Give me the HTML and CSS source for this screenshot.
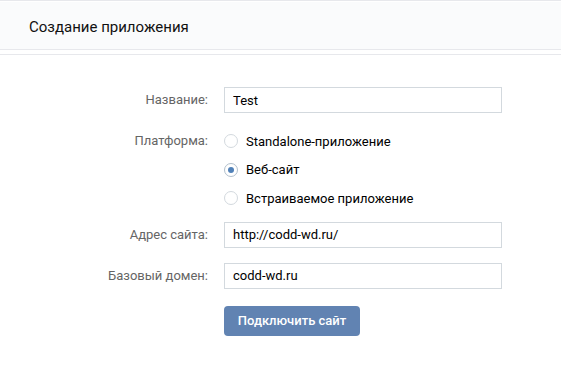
FILE: index.html
```html
<!DOCTYPE html>
<html lang="ru">
<head>
    <meta charset="UTF-8">
    <meta name="viewport" content="width=device-width, initial-scale=1.0">
    <title>Создание приложения</title>
    <link rel="stylesheet" href="styles.css">
</head>
<body>
    <div class="page">
        <div class="page-head">
            <div class="page-header">
                <h1 class="page-title">Создание приложения</h1>
            </div>
        </div>

        <form class="app-form">
            <div class="form-row">
                <label class="form-label" for="appName">Название:</label>
                <input class="form-input" id="appName" type="text" value="Test">
            </div>

            <div class="form-row form-row-top">
                <div class="form-label">Платформа:</div>
                <div class="radio-list">
                    <label class="radio">
                        <input type="radio" name="platform">
                        <span class="radio-mark"></span>
                        Standalone-приложение
                    </label>
                    <label class="radio">
                        <input type="radio" name="platform" checked>
                        <span class="radio-mark"></span>
                        Веб-сайт
                    </label>
                    <label class="radio">
                        <input type="radio" name="platform">
                        <span class="radio-mark"></span>
                        Встраиваемое приложение
                    </label>
                </div>
            </div>

            <div class="form-row">
                <label class="form-label" for="siteAddress">Адрес сайта:</label>
                <input class="form-input" id="siteAddress" type="text" value="http://codd-wd.ru/">
            </div>

            <div class="form-row">
                <label class="form-label" for="baseDomain">Базовый домен:</label>
                <input class="form-input" id="baseDomain" type="text" value="codd-wd.ru">
            </div>

            <div class="form-row form-actions">
                <div class="form-label"></div>
                <button class="button" type="button">Подключить сайт</button>
            </div>
        </form>
    </div>
</body>
</html>
```

FILE: styles.css
```css
body {
    margin: 0;
    background-color: #fff;
    font-family: Roboto, 'Open Sans', sans-serif;
    font-size: 13px;
    color: #000;
}

.page {
    border-top: 1px solid #e7e8ec;
}

.page-head {
    padding-bottom: 4px;
    border-bottom: 1px solid #e7e8ec;
}

.page-header {
    background-color: #fafbfc;
    border-top: 1px solid #fff;
    border-bottom: 1px solid #e7e8ec;
    height: 47px;
    padding: 0 29px;
    display: flex;
    align-items: center;
}

.page-title {
    margin: 0;
    padding-top: 2px;
    font-size: 15px;
    font-weight: normal;
    color: #111;
}

.app-form {
    padding-top: 31px;
}

.form-row {
    display: flex;
    align-items: center;
    margin-bottom: 13px;
}

.form-row-top {
    align-items: flex-start;
}

.form-label {
    width: 224px;
    padding-right: 16px;
    box-sizing: border-box;
    flex-shrink: 0;
    text-align: right;
    color: #656565;
    line-height: 28px;
}

.form-input {
    width: 278px;
    height: 26px;
    box-sizing: border-box;
    margin: 0;
    padding: 0 8px;
    border: 1px solid #d3d9de;
    border-radius: 0;
    font-family: inherit;
    font-size: 13px;
    color: #000;
    outline: none;
}

.radio-list {
    display: flex;
    flex-direction: column;
    margin-bottom: -5px;
}

.radio {
    display: flex;
    align-items: center;
    height: 28.5px;
    cursor: pointer;
}

.radio input {
    display: none;
}

.radio-mark {
    width: 14px;
    height: 14px;
    box-sizing: border-box;
    border: 1px solid #d3d9de;
    border-radius: 50%;
    margin-right: 8px;
    display: flex;
    align-items: center;
    justify-content: center;
}

.radio input:checked + .radio-mark {
    border-color: #b2bfcc;
}

.radio input:checked + .radio-mark::after {
    content: '';
    width: 6px;
    height: 6px;
    border-radius: 50%;
    background-color: #5181b8;
}

.form-actions {
    margin-top: 16px;
}

.button {
    width: 136px;
    height: 30px;
    border: none;
    border-radius: 4px;
    background-color: #6183b2;
    color: #fff;
    font-family: inherit;
    font-size: 13px;
    font-weight: 500;
    cursor: pointer;
}
```
